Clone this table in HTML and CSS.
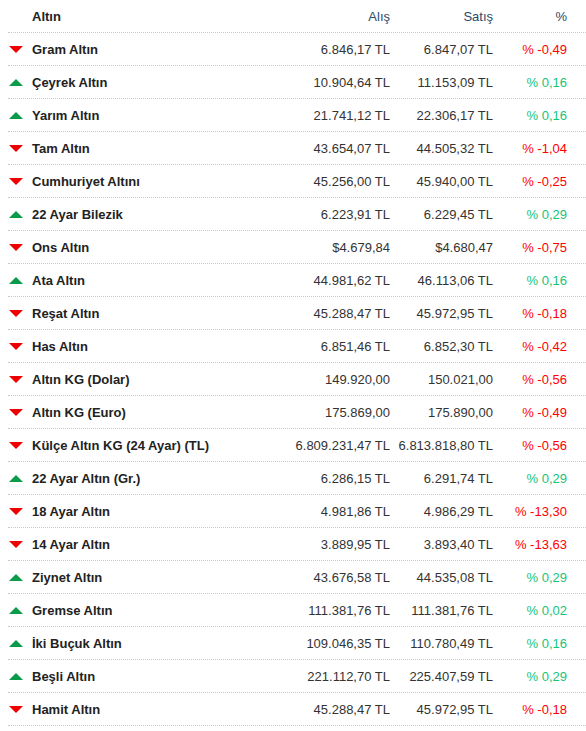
FILE: index.html
```html
<!DOCTYPE html>
<html lang="tr">
<head>
    <meta charset="UTF-8">
    <meta name="viewport" content="width=device-width, initial-scale=1.0">
    <title>Altın Fiyatları</title>
    <link rel="stylesheet" href="styles.css">
</head>
<body>
    <div class="gold-table">
        <div class="row head">
            <div class="name">Altın</div>
            <div class="num">Alış</div>
            <div class="num">Satış</div>
            <div class="num">%</div>
        </div>
        <div class="row"><div class="name"><span class="arrow down"></span>Gram Altın</div><div class="num">6.846,17 TL</div><div class="num">6.847,07 TL</div><div class="num pct down">% -0,49</div></div>
        <div class="row"><div class="name"><span class="arrow up"></span>Çeyrek Altın</div><div class="num">10.904,64 TL</div><div class="num">11.153,09 TL</div><div class="num pct up">% 0,16</div></div>
        <div class="row"><div class="name"><span class="arrow up"></span>Yarım Altın</div><div class="num">21.741,12 TL</div><div class="num">22.306,17 TL</div><div class="num pct up">% 0,16</div></div>
        <div class="row"><div class="name"><span class="arrow down"></span>Tam Altın</div><div class="num">43.654,07 TL</div><div class="num">44.505,32 TL</div><div class="num pct down">% -1,04</div></div>
        <div class="row"><div class="name"><span class="arrow down"></span>Cumhuriyet Altını</div><div class="num">45.256,00 TL</div><div class="num">45.940,00 TL</div><div class="num pct down">% -0,25</div></div>
        <div class="row"><div class="name"><span class="arrow up"></span>22 Ayar Bilezik</div><div class="num">6.223,91 TL</div><div class="num">6.229,45 TL</div><div class="num pct up">% 0,29</div></div>
        <div class="row"><div class="name"><span class="arrow down"></span>Ons Altın</div><div class="num">$4.679,84</div><div class="num">$4.680,47</div><div class="num pct down">% -0,75</div></div>
        <div class="row"><div class="name"><span class="arrow up"></span>Ata Altın</div><div class="num">44.981,62 TL</div><div class="num">46.113,06 TL</div><div class="num pct up">% 0,16</div></div>
        <div class="row"><div class="name"><span class="arrow down"></span>Reşat Altın</div><div class="num">45.288,47 TL</div><div class="num">45.972,95 TL</div><div class="num pct down">% -0,18</div></div>
        <div class="row"><div class="name"><span class="arrow down"></span>Has Altın</div><div class="num">6.851,46 TL</div><div class="num">6.852,30 TL</div><div class="num pct down">% -0,42</div></div>
        <div class="row"><div class="name"><span class="arrow down"></span>Altın KG (Dolar)</div><div class="num">149.920,00</div><div class="num">150.021,00</div><div class="num pct down">% -0,56</div></div>
        <div class="row"><div class="name"><span class="arrow down"></span>Altın KG (Euro)</div><div class="num">175.869,00</div><div class="num">175.890,00</div><div class="num pct down">% -0,49</div></div>
        <div class="row"><div class="name"><span class="arrow down"></span>Külçe Altın KG (24 Ayar) (TL)</div><div class="num">6.809.231,47 TL</div><div class="num">6.813.818,80 TL</div><div class="num pct down">% -0,56</div></div>
        <div class="row"><div class="name"><span class="arrow up"></span>22 Ayar Altın (Gr.)</div><div class="num">6.286,15 TL</div><div class="num">6.291,74 TL</div><div class="num pct up">% 0,29</div></div>
        <div class="row"><div class="name"><span class="arrow down"></span>18 Ayar Altın</div><div class="num">4.981,86 TL</div><div class="num">4.986,29 TL</div><div class="num pct down">% -13,30</div></div>
        <div class="row"><div class="name"><span class="arrow down"></span>14 Ayar Altın</div><div class="num">3.889,95 TL</div><div class="num">3.893,40 TL</div><div class="num pct down">% -13,63</div></div>
        <div class="row"><div class="name"><span class="arrow up"></span>Ziynet Altın</div><div class="num">43.676,58 TL</div><div class="num">44.535,08 TL</div><div class="num pct up">% 0,29</div></div>
        <div class="row"><div class="name"><span class="arrow up"></span>Gremse Altın</div><div class="num">111.381,76 TL</div><div class="num">111.381,76 TL</div><div class="num pct up">% 0,02</div></div>
        <div class="row"><div class="name"><span class="arrow up"></span>İki Buçuk Altın</div><div class="num">109.046,35 TL</div><div class="num">110.780,49 TL</div><div class="num pct up">% 0,16</div></div>
        <div class="row"><div class="name"><span class="arrow up"></span>Beşli Altın</div><div class="num">221.112,70 TL</div><div class="num">225.407,59 TL</div><div class="num pct up">% 0,29</div></div>
        <div class="row"><div class="name"><span class="arrow down"></span>Hamit Altın</div><div class="num">45.288,47 TL</div><div class="num">45.972,95 TL</div><div class="num pct down">% -0,18</div></div>
    </div>
</body>
</html>
```

FILE: styles.css
```css
body {
    margin: 0 0 0 8px;
    background: #fff;
    font-family: "Liberation Sans", Arial, sans-serif;
    font-size: 13px;
    color: #333;
}
.gold-table {
    width: 578px;
}
.row {
    display: grid;
    grid-template-columns: 1fr 103px 103px 74px;
    padding-right: 19px;
    height: 32px;
    align-items: center;
    border-bottom: 1px dotted #c8c8c8;
}
.row.head {
    color: #2c4a66;
}
.row.head .name {
    font-weight: bold;
    padding-left: 24px;
}
.name {
    display: flex;
    align-items: center;
    font-weight: bold;
    color: #222;
    white-space: nowrap;
}
.num {
    text-align: right;
    white-space: nowrap;
}
.pct.down {
    color: #ff0000;
}
.pct.up {
    color: #16c47a;
}
.arrow {
    width: 0;
    height: 0;
    margin: 0 9px 0 1px;
    border-left: 7px solid transparent;
    border-right: 7px solid transparent;
}
.arrow.down {
    border-top: 7px solid #ee0000;
}
.arrow.up {
    border-bottom: 7px solid #0a9b4a;
}
```
